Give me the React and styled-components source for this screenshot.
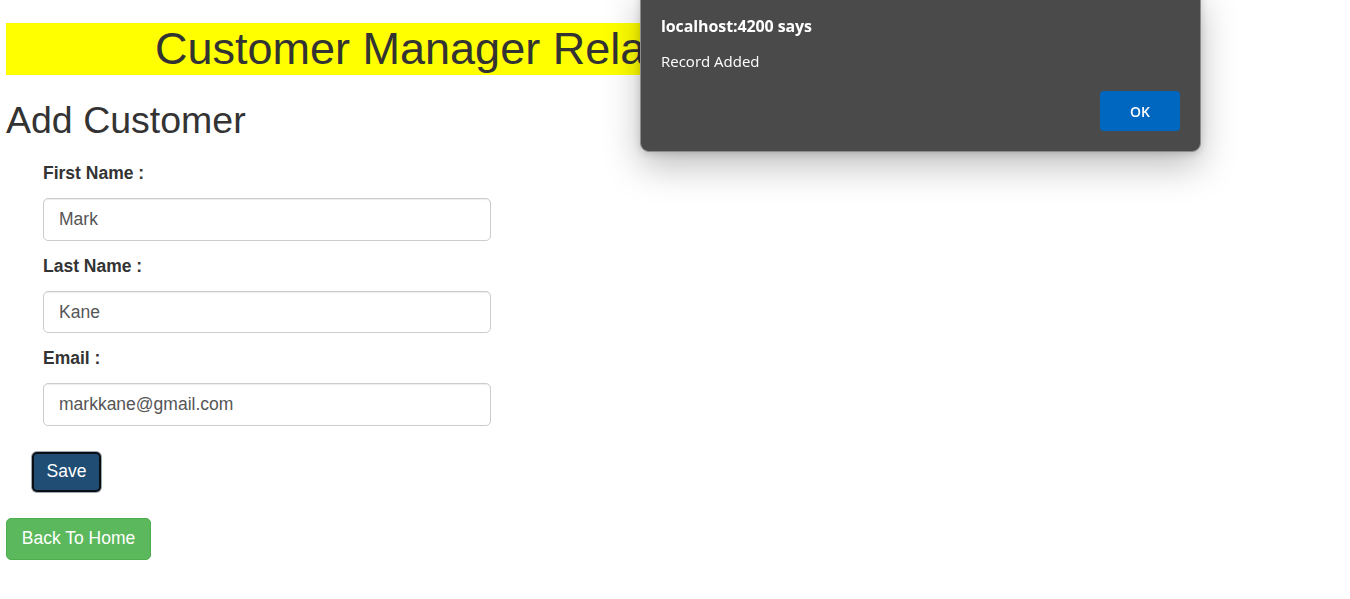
import React from "react";
import styled, { createGlobalStyle } from "styled-components";

const Global = createGlobalStyle`
  html, body { margin: 0; padding: 0; background: #fff; }
  body {
    font-family: "Liberation Sans", Arial, Helvetica, sans-serif;
    font-size: 17.5px;
    color: #333;
    overflow: hidden;
  }
  * { box-sizing: border-box; }
`;

const Page = styled.div`
  padding: 23px 6px 0 6px;
  min-height: 599px;
`;

const Banner = styled.h1`
  margin: 0;
  width: 968px;
  height: 52px;
  background: #ffff00;
  font-size: 45px;
  font-weight: 400;
  line-height: 52px;
  padding-left: 149px;
  white-space: nowrap;
  overflow: hidden;
  color: #333;
`;

const Heading = styled.h2`
  margin: 25px 0 0 0;
  font-size: 37.5px;
  font-weight: 400;
  line-height: 41.25px;
  color: #333;
`;

const Form = styled.form`
  margin-top: 20px;
  padding-left: 37px;
  display: flex;
  flex-direction: column;
`;

const Group = styled.div`
  display: flex;
  flex-direction: column;
  margin-bottom: 13px;
`;

const Label = styled.label`
  font-weight: 700;
  font-size: 17.5px;
  line-height: 25px;
  margin-bottom: 12px;
  color: #333;
`;

const Input = styled.input`
  width: 448px;
  height: 42.5px;
  padding: 7.5px 15px;
  font-family: "Liberation Sans", Arial, sans-serif;
  font-size: 17.5px;
  color: #555;
  border: 1px solid #ccc;
  border-radius: 5px;
  box-shadow: inset 0 1px 1px rgba(0, 0, 0, 0.075);
  outline: none;
  background: #fff;
`;

const Actions = styled.div`
  padding-top: 13px;
  margin-left: -11px;
`;

const SaveButton = styled.button`
  width: 69px;
  height: 40px;
  padding: 0;
  font-family: "Liberation Sans", Arial, sans-serif;
  font-size: 17.5px;
  color: #fff;
  background: #204d74;
  border: 2px solid #0b0f14;
  border-radius: 5px;
  box-shadow: 0 0 0 1px #9aa4ae;
  cursor: pointer;
`;

const HomeButton = styled.button`
  margin-top: 26px;
  width: 145px;
  height: 42px;
  padding: 0;
  font-family: "Liberation Sans", Arial, sans-serif;
  font-size: 17.5px;
  color: #fff;
  background: #5cb85c;
  border: 1px solid #4cae4c;
  border-radius: 5px;
  cursor: pointer;
`;

const Dialog = styled.div`
  position: fixed;
  left: 640px;
  top: -12px;
  width: 561px;
  height: 164px;
  background: #4a4a4a;
  border: 1px solid #8c8c8c;
  border-radius: 9px;
  box-shadow: 0 14px 36px rgba(0, 0, 0, 0.26), 0 2px 8px rgba(0, 0, 0, 0.15);
  padding: 25px 20px 0 20px;
  display: flex;
  flex-direction: column;
  font-family: "Open Sans", "Noto Sans", sans-serif;
  color: #fff;
`;

const DialogTitle = styled.div`
  font-weight: 700;
  font-size: 16px;
  line-height: 24px;
  letter-spacing: -0.1px;
`;

const DialogMessage = styled.div`
  margin-top: 12px;
  font-size: 15px;
  line-height: 22px;
`;

const DialogFooter = styled.div`
  margin-top: 19px;
  display: flex;
  justify-content: flex-end;
`;

const OkButton = styled.button`
  width: 80px;
  height: 40px;
  background: #0067c0;
  color: #fff;
  border: none;
  border-radius: 4px;
  font-family: "Open Sans", "Noto Sans", sans-serif;
  font-weight: 600;
  font-size: 14px;
  cursor: pointer;
`;

export default function App() {
  const fields = [
    { label: "First Name :", value: "Mark" },
    { label: "Last Name :", value: "Kane" },
    { label: "Email :", value: "markkane@gmail.com" },
  ];
  return (
    <>
      <Global />
      <Page>
        <Banner>Customer Manager Relationship</Banner>
        <Heading>Add Customer</Heading>
        <Form onSubmit={(e) => e.preventDefault()}>
          {fields.map((f) => (
            <Group key={f.label}>
              <Label>{f.label}</Label>
              <Input defaultValue={f.value} />
            </Group>
          ))}
          <Actions>
            <SaveButton type="submit">Save</SaveButton>
          </Actions>
        </Form>
        <HomeButton>Back To Home</HomeButton>
      </Page>
      <Dialog role="alertdialog">
        <DialogTitle>localhost:4200 says</DialogTitle>
        <DialogMessage>Record Added</DialogMessage>
        <DialogFooter>
          <OkButton>OK</OkButton>
        </DialogFooter>
      </Dialog>
    </>
  );
}
